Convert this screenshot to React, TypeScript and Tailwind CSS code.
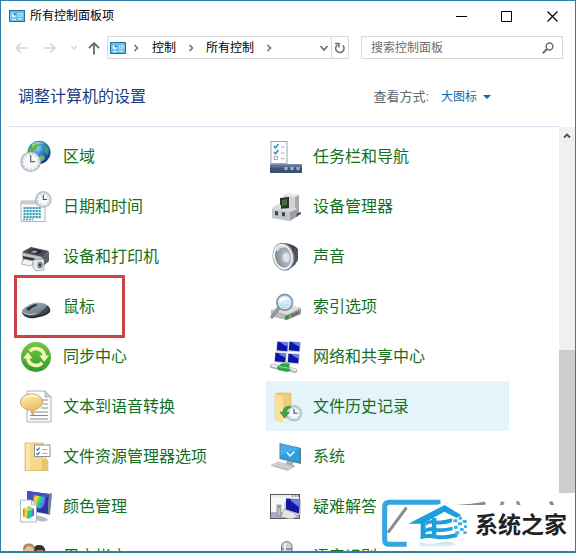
import type { ReactNode } from "react";

const FONT =
  "font-['Liberation_Sans','Noto_Sans_CJK_SC',sans-serif]";

function Icon({ children }: { children: ReactNode }) {
  return (
    <svg viewBox="0 0 32 32" className="size-8 shrink-0 overflow-visible" aria-hidden="true">
      {children}
    </svg>
  );
}

function ClockFace({ x, y, r }: { x: number; y: number; r: number }) {
  return (
    <g>
      <circle cx={x} cy={y} r={r} fill="#a3adb8" />
      <circle cx={x} cy={y} r={r - 0.8} fill="#cdd5dd" />
      <circle cx={x} cy={y} r={r - 1.9} fill="#f6f8fa" stroke="#b9c3cc" strokeWidth="0.5" />
      <circle cx={x} cy={y} r={r - 3} fill="none" stroke="#8593a0" strokeWidth="0.8" strokeDasharray="0.8 2.8" />
      <path d={`M${x} ${y - r + 3.5}V${y}H${x + r * 0.45}`} fill="none" stroke="#46525e" strokeWidth="1.1" />
    </g>
  );
}

function RegionIcon() {
  return (
    <Icon>
      <defs>
        <radialGradient id="globe" cx="0.4" cy="0.3" r="0.75">
          <stop offset="0" stopColor="#9fdcff" />
          <stop offset="0.4" stopColor="#3186dc" />
          <stop offset="1" stopColor="#0b2a8a" />
        </radialGradient>
      </defs>
      <circle cx="19" cy="12.3" r="11.5" fill="url(#globe)" />
      <path d="M11 6c2-3 6-5 8-4l1 3-3 2 0 2-4 2-2 0-2 1-1-2z" fill="#58b548" />
      <path d="M24 4l3 2 2 4-1 4-2 0-2-4 1-3-2-2z" fill="#3f9d55" />
      <path d="M20 15l4 1 1 3-4 3-1-3z" fill="#66bd54" />
      <path d="M12 4c4-3 10-3 13 0-5-1-9 0-13 3z" fill="#fff" opacity="0.35" />
      <ClockFace x={10.7} y={21.7} r={10.3} />
    </Icon>
  );
}

function DateIcon() {
  const rows = [17, 20, 23, 26];
  const cols = [6.5, 9.5, 12.5, 15.5, 18.5, 21.5];
  return (
    <Icon>
      <path d="M1 11h24v20.5H1z" fill="#fbfcfc" stroke="#9aa5ab" strokeWidth="0.8" />
      <path d="M1 11h24v3.5H1z" fill="#c9cdd0" />
      {rows.map((y) =>
        cols.map((x) => <rect key={`${x}-${y}`} x={x - 3} y={y} width="2.2" height="2.2" fill="#3c9fb8" />),
      )}
      <path d="M3 29.500h10" stroke="#3c9fb8" strokeWidth="1.6" strokeDasharray="2 1" />
      <ClockFace x={23.3} y={9.5} r={8.3} />
    </Icon>
  );
}

function PrinterIcon() {
  return (
    <Icon>
      <path d="M2 13l9-5 18 4v9l-7 6-20-5z" fill="#8c8f93" />
      <path d="M2 12l9-5 18 4-7 6z" fill="#4a4d52" />
      <path d="M8 12l5-3 10 2-5 3z" fill="#25282c" />
      <path d="M10 12l4-1.500 4 1-3 1.500z" fill="#9dafc0" />
      <path d="M2 13l20 4v10L2 22z" fill="#bfc2c5" />
      <path d="M3 16l12 2.500v3L3 18.500z" fill="#33363a" />
      <path d="M22 17l7-5v9l-7 6z" fill="#5c6065" />
      <path d="M4 19l10 2-3 5-10-2z" fill="#f4f4f4" stroke="#777" strokeWidth="0.5" />
      <path d="M13 20l11-1v11l-8 1-3-3z" fill="#e8e9ea" stroke="#888" strokeWidth="0.6" />
      <ellipse cx="20" cy="25" rx="2.800" ry="3.600" fill="#888d92" />
      <ellipse cx="20" cy="25" rx="1.200" ry="1.600" fill="#34383c" />
    </Icon>
  );
}

function MouseIcon() {
  return (
    <Icon>
      <defs>
        <linearGradient id="mouse" x1="0" y1="0" x2="0.5" y2="1">
          <stop offset="0" stopColor="#a8b5c0" />
          <stop offset="1" stopColor="#6b7883" />
        </linearGradient>
      </defs>
      <path d="M2 22c1 5 7 7 13 6 6-1 13-3 15-6 1-3-1-6-4-7z" fill="#2b3036" />
      <path d="M2 21c0-2 7-7 12-8 5-1 11 0 13 2 0 3-5 8-10 10C11 27 3 25 2 21z" fill="url(#mouse)" />
      <path d="M6 19c2-2 6-4 9-5l3 1c-3 1-7 3-9 6z" fill="#2a3444" />
      <path d="M3 22c3 3 9 3 13 1" fill="none" stroke="#d3dae0" strokeWidth="0.8" />
      <path d="M19 24c2-3 6-6 9-7l1 2c0 2-4 5-9 6z" fill="#454b52" />
    </Icon>
  );
}

function SyncIcon() {
  return (
    <Icon>
      <defs>
        <linearGradient id="sync" x1="0" y1="0" x2="0" y2="1">
          <stop offset="0" stopColor="#74c83e" />
          <stop offset="1" stopColor="#2f9a32" />
        </linearGradient>
      </defs>
      <circle cx="16" cy="17" r="15" fill="url(#sync)" />
      <g fill="none" stroke="#f4f6b4" strokeWidth="3.600">
        <path d="M9.800 11.300A8.400 8.400 0 0 1 24.300 16" />
        <path d="M22.200 22.700A8.400 8.400 0 0 1 7.700 18" />
      </g>
      <path d="M19.300 15.500h9.700l-4.800 6.200zM12.700 18.500H3l4.800-6.200z" fill="#f4f6b4" />
    </Icon>
  );
}

function SpeechTextIcon() {
  return (
    <Icon>
      <defs>
        <linearGradient id="bubble" x1="0" y1="0" x2="0.4" y2="1">
          <stop offset="0" stopColor="#fff0bd" />
          <stop offset="1" stopColor="#e9b659" />
        </linearGradient>
      </defs>
      <path d="M7 1h18l6 6v25H7z" fill="#fcfcfc" stroke="#989da2" strokeWidth="0.8" />
      <path d="M25 1v6h6z" fill="#c9d3dc" stroke="#989da2" strokeWidth="0.6" />
      <path d="M22 10h6M23 14h5M21 18h7M12 22h16M10 25.500h18M10 29h18" stroke="#858b92" strokeWidth="1" />
      <path d="M11.500 4C5 4 0.500 7.500 0.500 12s4 7.500 9 8l1 0c1 2 1 4 3 5-1-2 0-4 0-5 5-1 9-4 9-8 0-4.500-4.500-8-11-8z" fill="url(#bubble)" stroke="#c59343" strokeWidth="0.8" />
      <path d="M5 8c3-3 9-3 13-1" fill="none" stroke="#fffbe6" strokeWidth="1.500" />
    </Icon>
  );
}

function FolderOptionsIcon() {
  return (
    <Icon>
      <path d="M5 3h18v27.500H5z" fill="#f7d98b" stroke="#d9ae58" strokeWidth="0.7" />
      <path d="M6 4h4v26H6z" fill="#fbe7ae" />
      <path d="M23 30V21l2.500-3.500L28 21v9.500h-5z" fill="#efc668" stroke="#d9ae58" strokeWidth="0.5" />
      <rect x="14.500" y="5" width="15.500" height="11.500" fill="#fff" stroke="#7d8790" strokeWidth="0.9" />
      <path d="M16.500 9l1.200 1.200 2-2.500M16.500 13.500l1.200 1.200 2-2.500" fill="none" stroke="#2873ba" strokeWidth="1.100" />
      <path d="M22 9.500h5.500M22 13.500h5.500" stroke="#aab2ba" strokeWidth="1" />
    </Icon>
  );
}

function ColorIcon() {
  return (
    <Icon>
      <defs>
        <linearGradient id="rainbow" x1="0" y1="0" x2="1" y2="0.5">
          <stop offset="0" stopColor="#ef4335" />
          <stop offset="0.3" stopColor="#f4e83a" />
          <stop offset="0.55" stopColor="#3bd566" />
          <stop offset="0.8" stopColor="#2c9df0" />
          <stop offset="1" stopColor="#a23bd6" />
        </linearGradient>
        <linearGradient id="cube" x1="0" y1="0.3" x2="1" y2="0.4">
          <stop offset="0" stopColor="#fa4339" />
          <stop offset="0.3" stopColor="#f5eb39" />
          <stop offset="0.5" stopColor="#28d43b" />
          <stop offset="0.75" stopColor="#29b8ef" />
          <stop offset="1" stopColor="#8a3be4" />
        </linearGradient>
      </defs>
      <path d="M15 25l9 2 5 3-7 2-8-3z" fill="#b7bdc5" />
      <path d="M7 1l22 3 3-1-3 22-22-4z" fill="#c2c8d0" />
      <path d="M7 1l22 3-1 20L7 20z" fill="#2734a4" />
      <path d="M7 1l22 3-1 3L7 14z" fill="#4050bd" />
      <path d="M29 4l3-1-2 22-2-1z" fill="#747d8b" />
      <path d="M13 5l12 2c1 6-1 10-5 12-4-1-7-6-7-14z" fill="url(#rainbow)" />
      <path d="M0.500 10h11l5 5v17h-16z" fill="#fdfdfd" stroke="#a1a6aa" strokeWidth="0.8" />
      <path d="M11.500 10v5h5" fill="#e2e5e9" stroke="#a1a6aa" strokeWidth="0.7" />
      <path d="M3 19l5.500-3 5.500 2.500v7L8.500 29 3 26.500z" fill="url(#cube)" />
      <path d="M3 19l5.500-3 5.500 2.500-5.500 3z" fill="#fff17b" opacity="0.5" />
    </Icon>
  );
}

function UsersIcon() {
  return (
    <Icon>
      <path d="M12 30c0-7 3-12 8-12s8 5 8 12z" fill="#565b60" />
      <ellipse cx="19.500" cy="12" rx="5.500" ry="6.500" fill="#a98a70" />
      <path d="M13.500 12c-1-5 2-7 6-7s6.500 3 5.500 8l-2-3-5 0z" fill="#36312d" />
      <path d="M1 30c0-8 3-13 8-13s8 5 8 13z" fill="#719067" />
      <ellipse cx="9" cy="11" rx="5" ry="6.500" fill="#e8c397" />
      <path d="M3.500 11C2 6 5 3.500 9 3.500S15.500 6 14.500 11l-2-4-5-1z" fill="#a98a5b" />
    </Icon>
  );
}

function TaskbarIcon() {
  return (
    <Icon>
      <rect x="1" y="1.500" width="16" height="22" fill="#fdfdfd" stroke="#8a9096" strokeWidth="0.8" />
      <path d="M4 6l1.500 1.800L8.500 4M4 12l1.500 1.800L8.500 10" fill="none" stroke="#2a8fb8" strokeWidth="1.500" />
      <path d="M4 16.500h3.500v3H4z" fill="#fff" stroke="#8a9096" strokeWidth="0.8" />
      <path d="M11 7h3.500M11 13h3.500M11 18.500h3.500" stroke="#a7adb3" strokeWidth="0.9" />
      <path d="M0 24.500h32V33H0z" fill="#3b5378" />
      <path d="M0 24.500h32v3H0z" fill="#5c7598" />
      <path d="M14.500 27h3v3h-3zM20.500 27h3v3h-3zM26.500 27h3v3h-3z" fill="#a3b6ce" />
    </Icon>
  );
}

function DeviceManagerIcon() {
  return (
    <Icon>
      <path d="M14 5l4-2 11 2v17l-7 5-8-3z" fill="#d0d2d4" />
      <path d="M14 5l4-2 11 2-4 2z" fill="#ececec" />
      <path d="M25 7l4-2v17l-4 3z" fill="#a7abaf" />
      <path d="M10 8l9-1v11l-9 1z" fill="#24352b" />
      <path d="M12 10l5-1v6l-5 1z" fill="#466c3f" />
      <path d="M2 18l6-4 3 1v4l9 1 4-3 4 3v6l-9 5L2 28z" fill="#d9dbdd" />
      <path d="M2 19l18 3v9L2 28z" fill="#c4c7ca" />
      <path d="M20 22l8-3v7l-8 5z" fill="#9b9fa4" />
      <path d="M5 21l3 .5v4L5 25zM12 22l3 .5v4l-3-.5z" fill="#3f444a" />
      <path d="M27 23l4-1v2l-5 3z" fill="#4c5055" />
    </Icon>
  );
}

function SoundIcon() {
  return (
    <Icon>
      <defs>
        <radialGradient id="cone" cx="0.7" cy="0.55" r="0.7">
          <stop offset="0" stopColor="#edf1f5" />
          <stop offset="0.35" stopColor="#aeb8c2" />
          <stop offset="1" stopColor="#7d8791" />
        </radialGradient>
      </defs>
      <path d="M12 3c7 0 15 3 16 7v9c-2 6-7 10-13 11z" fill="#3f4348" />
      <path d="M25 8v17M27 10v12" stroke="#73787d" strokeWidth="0.7" />
      <ellipse cx="13.500" cy="16.800" rx="10.800" ry="14" fill="#868d94" transform="rotate(-12 13.500 16.800)" />
      <ellipse cx="13" cy="16.800" rx="9.800" ry="13" fill="#f2f3f4" transform="rotate(-12 13 16.800)" />
      <ellipse cx="13.200" cy="16.800" rx="8" ry="11" fill="url(#cone)" transform="rotate(-12 13.200 16.800)" />
      <ellipse cx="16" cy="17.500" rx="3.400" ry="4.400" fill="#dce3e9" />
      <path d="M7 11c2-4 5-5 8-4" stroke="#d9e0e7" strokeWidth="2" fill="none" />
    </Icon>
  );
}

function IndexIcon() {
  return (
    <Icon>
      <path d="M1 21l12-7 18 4v6l-14 6L1 26z" fill="#96999c" />
      <path d="M1 20l12-6 18 4-14 7z" fill="#dddfe1" />
      <path d="M1 20l16 5v5L1 26z" fill="#b9bcbf" />
      <path d="M15 26l4-1.500v4L15 30z" fill="#428c32" />
      <path d="M21 24.500l8-3.500v3l-8 3.500z" fill="#6a6e72" />
      <path d="M9 18l-7 9" stroke="#757c85" strokeWidth="3" strokeLinecap="round" />
      <path d="M9 18l-7 9" stroke="#bac1c9" strokeWidth="1" strokeLinecap="round" />
      <circle cx="14.700" cy="12.300" r="7.800" fill="#d5ebfb" stroke="#8d969f" strokeWidth="1.800" />
      <path d="M9 12c1-5 6-6 10-3-3 0-6 2-10 3z" fill="#fff" opacity="0.9" />
      <path d="M10 15h9M12 17.500h5" stroke="#a4cbe6" strokeWidth="0.8" />
    </Icon>
  );
}

function NetMonitor({ x, y }: { x: number; y: number }) {
  return (
    <g transform={`translate(${x} ${y})`}>
      <path d="M1 0l12 1-1 10.500L0 10.500z" fill="#cdd3df" />
      <path d="M1.500.8l10.500.9-.8 8.500L.8 9.300z" fill="#0b16a2" />
      <path d="M4 1l8 .7-.4 4C8 4 6 3 4 1z" fill="#6e82e8" />
    </g>
  );
}

function NetworkIcon() {
  return (
    <Icon>
      <path d="M2 26l23 4.500" stroke="#a7adb2" strokeWidth="4.500" strokeLinecap="round" />
      <path d="M2 25.500l23 4.500" stroke="#e9ebed" strokeWidth="2.500" strokeLinecap="round" />
      <path d="M12 23l5-1 3 2-1 3 2 3-4 2-9-2-1-3z" fill="#2fa34b" />
      <path d="M9 26.500l11 2" stroke="#8be09b" strokeWidth="1" />
      <NetMonitor x={6} y={1} />
      <NetMonitor x={18} y={1} />
      <NetMonitor x={4} y={12} />
      <NetMonitor x={17} y={13} />
    </Icon>
  );
}

function FileHistoryIcon() {
  return (
    <Icon>
      <path d="M5 4l3-1h13v25H8l-3 2z" fill="#f0cc73" stroke="#dcb461" strokeWidth="0.6" />
      <path d="M5 4l8 3v26l-8-3z" fill="#fbe19a" />
      <ClockFace x={24} y={23.300} r={8} />
      <path d="M20 16c-5 0-7 3-7 6h-3l4.500 6 5-6h-3c0-2 1-4 4-4z" fill="#43a24b" stroke="#278037" strokeWidth="0.5" />
    </Icon>
  );
}

function SystemIcon() {
  return (
    <Icon>
      <path d="M17 21l6 1v3l3 1-4 1.500-7-2z" fill="#a6adb4" />
      <path d="M9.500 3L31 8v16l-21.500-5z" fill="#607b90" />
      <path d="M10.500 4L29.500 8.500v13.800l-19-4.300z" fill="#2b9fe0" />
      <path d="M10.500 4L29.500 8.500l-19 7z" fill="#45aee8" />
      <path d="M17 12.500l3 3.500 4.500-4.500" fill="none" stroke="#fff" strokeWidth="1.500" />
      <path d="M1 25.500l7-3.500 16 4.500-6 4z" fill="#d9dcdf" stroke="#a3a9af" strokeWidth="0.7" />
      <path d="M4 25.500l14 3.500M7 24l14 3.500" stroke="#a3a9b0" strokeWidth="0.9" strokeDasharray="1.500 .7" />
    </Icon>
  );
}

function TroubleshootIcon() {
  return (
    <Icon>
      <rect x="0.500" y="4.500" width="29" height="24" fill="#f7f7f8" stroke="#54585d" strokeWidth="1" />
      <path d="M1 5h28v2.500H1z" fill="#eceef0" />
      <path d="M22 6h1.500M25 6h1.500M27.500 6H29" stroke="#444" strokeWidth="1" />
      <path d="M1 22h28v6H1z" fill="#b6a8cc" />
      <path d="M7 15h4v11H7z" fill="#b9bec3" stroke="#6f757b" strokeWidth="0.6" />
      <path d="M8 17h2" stroke="#37813c" strokeWidth="1" />
      <path d="M14 14l3-6 14 1v16l-17-2z" fill="#cbd0d7" />
      <path d="M16 8.500l14 1-1 14-13-4z" fill="#1019a0" />
      <path d="M20 9l10 .5-.6 8C26 14 22 13 20 9z" fill="#7181dc" />
      <path d="M14 19l10 4 3 4-6 2-10-2z" fill="#e2e5e8" stroke="#989ea4" strokeWidth="0.6" />
    </Icon>
  );
}

function MicIcon() {
  return (
    <Icon>
      <rect x="11.500" y="1.500" width="10.500" height="18" rx="5.200" fill="#cdd2d7" stroke="#6f767d" strokeWidth="1" />
      <path d="M12 9h10M12 12h10" stroke="#555c63" strokeWidth="1.200" />
      <path d="M15 3v14" stroke="#f8f9fa" strokeWidth="1.500" />
      <path d="M8 14v4c0 8 17 8 17 0v-4M16.500 24v5M10 30h13" fill="none" stroke="#60666c" strokeWidth="1.500" />
    </Icon>
  );
}

function PanelIcon() {
  return (
    <svg viewBox="0 0 16 12" className="h-3 w-4 shrink-0" aria-hidden="true">
      <rect x="0.500" y="0.500" width="15" height="11" fill="#68bfee" stroke="#2e6e93" />
      <circle cx="4.800" cy="5.300" r="2.300" fill="#d9f2fc" />
      <path d="M4.800 5.300V3a2.300 2.300 0 0 1 2.300 2.300z" fill="#246d9b" />
      <path d="M9 3.500h4.500v3H9z" fill="#e6f6fd" />
      <path d="M9.500 5h3" stroke="#3e8fba" strokeWidth="1" />
      <path d="M3 9.500h4M9 9h4" stroke="#e4f5fd" strokeWidth="1.200" />
    </svg>
  );
}

function Chevron({ down = false, className = "" }: { down?: boolean; className?: string }) {
  return (
    <svg viewBox="0 0 10 10" className={`size-[10px] shrink-0 ${className}`} fill="none" stroke="currentColor" strokeWidth="1.700" aria-hidden="true">
      <path d={down ? "M1.500 3l3.500 4 3.500-4" : "M3.500 2l3 3-3 3"} />
    </svg>
  );
}

type Item = { label: string; icon: ReactNode; selected?: boolean; marked?: boolean };

const items: Item[] = [
  { label: "区域", icon: <RegionIcon /> },
  { label: "任务栏和导航", icon: <TaskbarIcon /> },
  { label: "日期和时间", icon: <DateIcon /> },
  { label: "设备管理器", icon: <DeviceManagerIcon /> },
  { label: "设备和打印机", icon: <PrinterIcon /> },
  { label: "声音", icon: <SoundIcon /> },
  { label: "鼠标", icon: <MouseIcon />, marked: true },
  { label: "索引选项", icon: <IndexIcon /> },
  { label: "同步中心", icon: <SyncIcon /> },
  { label: "网络和共享中心", icon: <NetworkIcon /> },
  { label: "文本到语音转换", icon: <SpeechTextIcon /> },
  { label: "文件历史记录", icon: <FileHistoryIcon />, selected: true },
  { label: "文件资源管理器选项", icon: <FolderOptionsIcon /> },
  { label: "系统", icon: <SystemIcon /> },
  { label: "颜色管理", icon: <ColorIcon /> },
  { label: "疑难解答", icon: <TroubleshootIcon /> },
  { label: "用户帐户", icon: <UsersIcon /> },
  { label: "语音识别", icon: <MicIcon /> },
];

function TitleBar() {
  return (
    <header className="flex h-[30px] shrink-0 items-center pl-2">
      <PanelIcon />
      <h1 className="ml-[5px] flex-1 text-xs text-black">所有控制面板项</h1>
      <div className="flex h-full text-black">
        <button aria-label="最小化" className="grid w-[45px] place-items-center">
          <svg viewBox="0 0 11 11" className="size-[11px]" stroke="currentColor"><path d="M0 5.500h11" /></svg>
        </button>
        <button aria-label="最大化" className="grid w-[45px] place-items-center">
          <svg viewBox="0 0 11 11" className="size-[11px]" fill="none" stroke="currentColor"><path d="M.5.5h10v10H.5z" /></svg>
        </button>
        <button aria-label="关闭" className="grid w-[46px] place-items-center">
          <svg viewBox="0 0 11 11" className="size-[11px]" stroke="currentColor" strokeWidth="1.200"><path d="M.5.5l10 10M10.500.5l-10 10" /></svg>
        </button>
      </div>
    </header>
  );
}

function NavBar() {
  return (
    <div className="flex h-[33px] shrink-0 items-center px-3">
      <button aria-label="后退" className="grid size-4 place-items-center text-[#d4d4d4]">
        <svg viewBox="0 0 14 14" className="size-[14px]" fill="none" stroke="currentColor" strokeWidth="1.500"><path d="M13 7H2M7 2L2 7l5 5" /></svg>
      </button>
      <button aria-label="前进" className="ml-[13px] grid size-4 place-items-center text-[#d4d4d4]">
        <svg viewBox="0 0 14 14" className="size-[14px]" fill="none" stroke="currentColor" strokeWidth="1.500"><path d="M1 7h11M7 2l5 5-5 5" /></svg>
      </button>
      <button aria-label="最近位置" className="ml-[11px] grid h-4 w-[10px] place-items-center text-[#d4d4d4]">
        <svg viewBox="0 0 8 8" className="size-2" fill="none" stroke="currentColor" strokeWidth="1.500"><path d="M1.500 2.500L4 5l2.500-2.500" /></svg>
      </button>
      <button aria-label="上移" className="ml-[7px] grid size-4 place-items-center text-[#6e6e6e]">
        <svg viewBox="0 0 14 14" className="size-[14px]" fill="none" stroke="currentColor" strokeWidth="1.900"><path d="M7 13.500V2M2 7l5-5 5 5" /></svg>
      </button>
      <nav aria-label="地址" className="ml-[5px] flex h-[23px] flex-1 items-center border border-[#d9d9d9] pl-[2px] text-xs text-black">
        <PanelIcon />
        <Chevron className="ml-[5px] text-[#777]" />
        <button className="ml-[11px]">控制</button>
        <Chevron className="ml-[10px] text-[#777]" />
        <button className="ml-[10px]">所有控制</button>
        <Chevron className="ml-[10px] text-[#777]" />
        <button aria-label="以前的位置" className="ml-auto pr-[2px] text-[#6e6e6e]">
          <Chevron down />
        </button>
        <button aria-label="刷新" className="grid h-full w-[17px] place-items-center border-l border-[#d9d9d9] text-[#6e6e6e]">
          <svg viewBox="0 0 12 12" className="size-3" fill="none" stroke="currentColor" strokeWidth="1.500">
            <path d="M3.500 2.800A4.200 4.200 0 1 0 9 3.500" />
            <path d="M1 1.500h4v4" />
          </svg>
        </button>
      </nav>
      <label className="ml-3 flex h-[23px] w-[202px] items-center border border-[#d9d9d9] pr-2 pl-[9px]">
        <input
          type="search"
          aria-label="搜索控制面板"
          placeholder="搜索控制面板"
          className="w-0 flex-1 text-xs text-black outline-none placeholder:text-[#6d6d6d]"
        />
        <svg viewBox="0 0 12 12" className="size-3 shrink-0" fill="none" stroke="#707070" strokeWidth="1.500" aria-hidden="true">
          <circle cx="7.500" cy="4.500" r="3.400" />
          <path d="M5 7L.8 11.200" strokeWidth="2" />
        </svg>
      </label>
    </div>
  );
}

function Heading() {
  return (
    <div className="flex h-[62px] shrink-0 items-center pt-1 pr-[84px] pl-[17px]">
      <h2 className="flex-1 text-base text-[#1b3e83]">调整计算机的设置</h2>
      <label htmlFor="view" className="text-[13px] text-[#5e6670]">查看方式:</label>
      <div className="relative ml-3 flex items-center">
        <select id="view" className="w-[50px] appearance-none text-xs text-[#1668a6] outline-none">
          <option>大图标</option>
        </select>
        <svg viewBox="0 0 8 4" className="pointer-events-none absolute right-0 h-1 w-2" aria-hidden="true">
          <path d="M0 0h8L4 4z" fill="#1f5f9b" />
        </svg>
      </div>
    </div>
  );
}

function ItemLink({ item }: { item: Item }) {
  return (
    <li className="relative">
      <a
        href="#"
        className={`flex h-[50px] items-center gap-[11px] pl-1 text-base text-[#14701f] ${item.selected ? "bg-[#e5f3fb]" : ""}`}
      >
        {item.icon}
        <span className="pt-[2px]">{item.label}</span>
      </a>
      {item.marked && (
        <span className="pointer-events-none absolute -top-[6px] -left-[2px] h-[63px] w-[111px] border-3 border-[#cb4344]" />
      )}
    </li>
  );
}

function Scrollbar() {
  return (
    <div className="flex w-4 shrink-0 flex-col bg-[#f0f0f0]">
      <button aria-label="向上滚动" className="grid h-[17px] place-items-center text-[#505050]">
        <svg viewBox="0 0 8 8" className="size-2" fill="none" stroke="currentColor" strokeWidth="1.800"><path d="M1 5.500l3-3 3 3" /></svg>
      </button>
      <div className="flex-[207]" />
      <div className="flex-[184] bg-[#cdcdcd]" />
      <div className="h-[17px]" />
    </div>
  );
}

function SiteLogo() {
  return (
    <div className="absolute right-0 bottom-0 flex h-[60px] w-[200px] items-center bg-white">
      <svg viewBox="0 69 288 180" className="h-[60px] w-24 shrink-0" aria-hidden="true">
        <defs>
          <linearGradient id="reflect" x1="0" y1="0" x2="0" y2="1">
            <stop offset="0" stopColor="#bcdcec" />
            <stop offset="1" stopColor="#fff" />
          </linearGradient>
        </defs>
        <path d="M186 103V97H40q-14 0-14 14v98q0 14 14 14h52" fill="none" stroke="#33a8e0" strokeWidth="15" />
        <path d="M36 188L92 112" stroke="#8b8b8b" strokeWidth="9" />
        <path d="M94 105h190v128H94z" fill="#fff" />
        <path d="M97 161L206 105l50 31-14 8-37-19-64 36z" fill="#1c9fdd" />
        <path d="M134 158l15-5v49l-15 4z" fill="#1c9fdd" />
        <path d="M150 155q14-8 28-4t50-6v12q-30 10-50 5t-28 5zM148 176q16-8 30-3t52-3v11q-32 8-52 4t-30 3zM134 196q26-8 44-2t66-5v12q-40 10-66 5t-44 2z" fill="#1c9fdd" />
        <path d="M168 144h13v60h-13z" fill="#1c9fdd" />
        <path d="M232 148h12v9h-12zM248 140h10v9h-10zM246 157h12v9h-12zM260 150h12v9h-12zM234 167h11v9h-11zM252 174h11v9h-11zM264 166h9v8h-9zM238 184h12v9h-12zM262 184h10v8h-10z" fill="#42b1e5" />
        <path d="M132 216q25 10 55 3t55 4q-28 14-56 9t-54 2z" fill="url(#reflect)" />
      </svg>
      <div className="absolute top-2 left-[76px] h-1 w-[116px] overflow-hidden" aria-hidden="true">
        <span className="block text-[40px] leading-[40px] whitespace-nowrap text-[#8b8b8b]">系统家</span>
      </div>
      <span className="ml-[3px] pt-1 text-[23px] font-bold whitespace-nowrap text-[#222]">系统之家</span>
    </div>
  );
}

export default function App() {
  return (
    <div className={`relative flex h-screen flex-col overflow-hidden border border-b-2 border-[#2f7fa8] bg-white ${FONT}`}>
      <TitleBar />
      <NavBar />
      <Heading />
      <div className="mr-4 ml-2 h-px shrink-0 bg-[#d5e1ee]" />
      <main className="flex min-h-0 flex-1">
        <ul className="grid flex-1 auto-rows-[50px] grid-cols-[repeat(auto-fill,243px)] gap-x-[7px] overflow-hidden pt-1 pl-[15px]">
          {items.map((item) => (
            <ItemLink key={item.label} item={item} />
          ))}
        </ul>
        <Scrollbar />
      </main>
      <div className="absolute -right-px -bottom-[2px]">
        <SiteLogo />
      </div>
    </div>
  );
}
